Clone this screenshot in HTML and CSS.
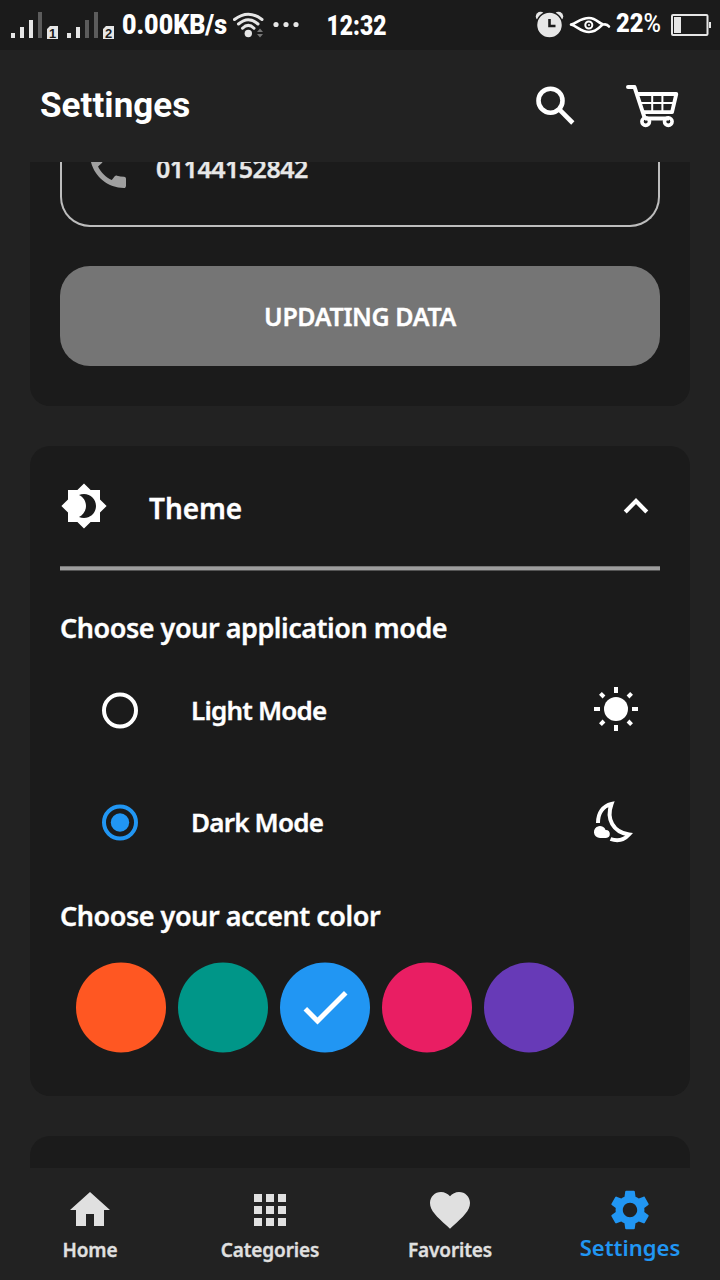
FILE: index.html
```html
<!DOCTYPE html>
<html lang="en">
<head>
<meta charset="utf-8">
<title>Settinges</title>
<link rel="stylesheet" href="styles.css">
</head>
<body>
<div class="app">
  <div class="status">
    <svg class="signals" width="106" height="50" viewBox="10 0 106 50">
      <g fill="#e6e6e6">
        <path d="M11 33h4v5h-4zM20 27h4v11h-4zM29 20h4v18h-4zM67 33h4v5h-4zM76 27h4v11h-4z"/>
        <path d="M50 26h8v13H47V29zM106 26h8v13h-11V29z"/>
      </g>
      <path fill="#5c5c5c" d="M38 12h4v26h-4zM85 20h4v18h-4zM94 12h4v26h-4z"/>
      <text class="sim" x="52.7" y="37.5">1</text>
      <text class="sim" x="108.5" y="37.5">2</text>
    </svg>
    <svg class="speed" width="108" height="50" viewBox="0 0 108 50"><text class="digits" x="1" y="34" font-size="28" textLength="105" lengthAdjust="spacingAndGlyphs">0.00KB/s</text></svg>
    <svg class="wifi" width="70" height="50" viewBox="232 0 70 50">
      <g fill="none" stroke="#e6e6e6" stroke-width="3" stroke-linecap="round">
        <path d="M234.5 19.5Q248.3 9 262 19.5"/>
        <path d="M238.5 24Q248.3 15.5 258 24"/>
        <path d="M242.5 28.2Q248.3 22.5 254 28.2"/>
      </g>
      <g fill="#e6e6e6"><circle cx="248.3" cy="33.5" r="3.7"/><circle cx="276" cy="24.5" r="2.6"/><circle cx="286" cy="24.5" r="2.6"/><circle cx="296" cy="24.5" r="2.6"/></g>
      <path fill="#777" d="M257 32l3-3.500 3 3.500zM257 34h6l-3 3.500z"/>
    </svg>
    <svg class="clock" width="62" height="50" viewBox="0 0 62 50"><text class="digits" x="0.5" y="35" font-size="28" textLength="60" lengthAdjust="spacingAndGlyphs">12:32</text></svg>
    <svg class="alarm" width="76" height="50" viewBox="535 0 76 50">
      <g fill="#e6e6e6"><circle cx="540.5" cy="16.5" r="4.7"/><circle cx="558.5" cy="16.5" r="4.7"/></g>
      <circle cx="549.5" cy="25" r="13" fill="#e6e6e6" stroke="#1b1b1b" stroke-width="1.5"/>
      <path fill="none" stroke="#1b1b1b" stroke-width="2.6" d="M549.5 19v7h6"/>
      <path fill="none" stroke="#fff" stroke-width="2.6" stroke-linejoin="round" stroke-linecap="round" d="M571 24.500C576 24 580 18 589 18C597 18 600 25 604 24.500Q607 24 609 26.500M571 24.500C577 26 581 32 589 32C596 32 600 27 602.500 24.500"/>
      <circle cx="588.8" cy="25" r="3.5" fill="none" stroke="#fff" stroke-width="2"/><circle cx="589" cy="25" r="1" fill="#fff"/>
    </svg>
    <svg class="percent" width="48" height="50" viewBox="0 0 48 50"><text class="digits" x="1" y="32" font-size="25" textLength="45" lengthAdjust="spacingAndGlyphs">22<tspan class="thin">%</tspan></text></svg>
    <svg class="battery" width="42" height="50" viewBox="670 0 42 50">
      <rect x="672" y="15" width="35.5" height="20" rx="1" fill="none" stroke="#e6e6e6" stroke-width="2"/>
      <path fill="#e6e6e6" d="M674 17h7v16h-7zM709 22h2v6h-2z"/>
    </svg>
  </div>

  <header class="bar">
    <h1 class="bar-title">Settinges</h1>
    <div class="bar-actions">
      <svg width="48" height="48" viewBox="0 0 48 48" fill="none" stroke="#fff">
        <circle cx="18.5" cy="18.7" r="12" stroke-width="4.6"/>
        <path stroke-width="4.6" d="M27 27.2L40.8 41"/>
      </svg>
      <svg width="56" height="48" viewBox="0 0 56 48" fill="none" stroke="#fff" stroke-linejoin="round">
        <path stroke-width="4" stroke-linecap="round" d="M4 5h6.500L20.500 35.500"/>
        <path stroke-width="3.8" d="M13.500 12H52.300L48 30.200H19.500M21 36.500H45"/>
        <path stroke-width="2" d="M16 21H50M28.200 12v17.500M38.400 12v17.500"/>
        <circle cx="21.7" cy="39.6" r="3.8" stroke-width="3.6"/>
        <circle cx="44.3" cy="39.6" r="3.8" stroke-width="3.6"/>
      </svg>
    </div>
  </header>

  <main class="content">
    <section class="card card-profile">
      <div class="field">
        <svg width="48" height="48" viewBox="0 0 24 24" fill="#a0a0a0"><path d="M20.010 15.380c-1.230 0-2.420-.2-3.530-.56-.35-.12-.74-.03-1.010.24l-1.570 1.970c-2.830-1.350-5.480-3.900-6.890-6.830l1.950-1.660c.27-.28.35-.67.24-1.020-.37-1.110-.56-2.300-.56-3.530 0-.54-.45-.99-.99-.99H4.190C3.650 3 3 3.240 3 3.990 3 13.280 10.730 21 20.010 21c.71 0 .99-.63.99-1.180v-3.450c0-.54-.45-.99-.99-.99z"/></svg>
        <span class="phone">01144152842</span>
      </div>
      <button class="update">UPDATING DATA</button>
    </section>

    <section class="card card-theme">
      <div class="card-head">
        <svg width="48" height="48" viewBox="0 0 24 24" fill="#fff"><path d="M20 8.690V4h-4.690L12 .69 8.690 4H4v4.690L.69 12 4 15.310V20h4.690L12 23.310 15.310 20H20v-4.690L23.310 12 20 8.690zM12 18c-.89 0-1.740-.2-2.500-.55C11.560 16.500 13 14.420 13 12s-1.440-4.500-3.500-5.450C10.260 6.200 11.110 6 12 6c3.310 0 6 2.690 6 6s-2.690 6-6 6z"/></svg>
        <h2 class="card-title">Theme</h2>
        <svg width="48" height="48" viewBox="0 0 24 24" fill="none" stroke="#fff" stroke-width="2.1"><path d="M6.600 15L12 9.500l5.400 5.500"/></svg>
      </div>
      <div class="rule"></div>
      <h3 class="label label-mode">Choose your application mode</h3>
      <div class="option">
        <svg width="48" height="48" viewBox="0 0 48 48"><circle cx="24" cy="23.5" r="16" fill="none" stroke="#fff" stroke-width="4"/></svg>
        <span class="option-name">Light Mode</span>
        <svg width="48" height="48" viewBox="0 0 48 48" fill="#fff">
          <circle cx="24" cy="22" r="12"/>
          <path d="M22 0h4v6h-4zM22 38h4v6h-4zM2 20h6v4H2zM40 20h6v4h-6z"/>
          <g transform="translate(24 22) rotate(45)"><path d="M-2-22h4v5h-4zM-2 17h4v5h-4zM-22-2h5v4h-5zM17-2h5v4h-5z"/></g>
        </svg>
      </div>
      <div class="option">
        <svg width="48" height="48" viewBox="0 0 48 48"><circle cx="24" cy="23.5" r="16" fill="none" stroke="#2196f3" stroke-width="4"/><circle cx="24" cy="23.5" r="9.2" fill="#2196f3"/></svg>
        <span class="option-name">Dark Mode</span>
        <svg width="48" height="48" viewBox="0 0 48 48">
          <path fill="none" stroke="#fff" stroke-width="4" d="M6 24C6 14 11 7 19.500 5C14 20 21 33 37 35.500C32 41 25 42.500 18.500 40"/>
          <path fill="#fff" d="M8 39a6 6 0 1 1 5.600-8A4 4 0 1 1 14 39z"/>
        </svg>
      </div>
      <h3 class="label label-accent">Choose your accent color</h3>
      <div class="swatches">
        <svg width="90" height="91"><circle cx="45" cy="45.5" r="45" fill="#ff5722"/></svg>
        <svg width="90" height="91"><circle cx="45" cy="45.5" r="45" fill="#009688"/></svg>
        <svg width="90" height="91"><circle cx="45" cy="45.5" r="45" fill="#2196f3"/><path fill="#fff" transform="translate(15 15) scale(2.5)" d="M9 16.170L4.830 12l-1.420 1.410L9 19 21 7l-1.410-1.410z"/></svg>
        <svg width="90" height="91"><circle cx="45" cy="45.5" r="45" fill="#e91e63"/></svg>
        <svg width="90" height="91"><circle cx="45" cy="45.5" r="45" fill="#673ab7"/></svg>
      </div>
    </section>

    <section class="card card-next"></section>
  </main>

  <nav class="tabs">
    <div class="tab">
      <svg width="48" height="48" viewBox="0 0 24 24"><path d="M10 20v-6h4v6h5v-8h3L12 3 2 12h3v8z"/></svg>
      <span class="tab-name">Home</span>
    </div>
    <div class="tab">
      <svg width="48" height="48" viewBox="0 0 24 24"><path d="M4 8h4V4H4v4zm6 12h4v-4h-4v4zm-6 0h4v-4H4v4zm0-6h4v-4H4v4zm6 0h4v-4h-4v4zm6-10v4h4V4h-4zm-6 4h4V4h-4v4zm6 6h4v-4h-4v4zm0 6h4v-4h-4v4z"/></svg>
      <span class="tab-name">Categories</span>
    </div>
    <div class="tab">
      <svg width="48" height="48" viewBox="0 0 24 24"><path d="M12 21.350l-1.450-1.320C5.400 15.360 2 12.280 2 8.500 2 5.420 4.420 3 7.500 3c1.740 0 3.410.81 4.500 2.090C13.090 3.810 14.760 3 16.500 3 19.580 3 22 5.420 22 8.500c0 3.780-3.400 6.860-8.550 11.540L12 21.350z"/></svg>
      <span class="tab-name">Favorites</span>
    </div>
    <div class="tab tab-active">
      <svg width="48" height="48" viewBox="0 0 24 24"><path d="M19.140 12.940c.04-.3.06-.61.06-.94 0-.32-.02-.64-.07-.94l2.030-1.580c.18-.14.23-.41.12-.61l-1.920-3.320c-.12-.22-.37-.29-.59-.22l-2.390.96c-.5-.38-1.030-.7-1.620-.94l-.36-2.540c-.04-.24-.24-.41-.48-.41h-3.840c-.24 0-.43.17-.47.41l-.36 2.540c-.59.24-1.130.57-1.620.94l-2.390-.96c-.22-.08-.47 0-.59.22L2.740 8.870c-.12.21-.08.47.12.61l2.030 1.580c-.05.3-.09.63-.09.94s.02.64.07.94l-2.030 1.580c-.18.14-.23.41-.12.61l1.920 3.320c.12.22.37.29.59.22l2.390-.96c.5.38 1.030.7 1.620.94l.36 2.540c.05.24.24.41.48.41h3.840c.24 0 .44-.17.47-.41l.36-2.540c.59-.24 1.130-.56 1.620-.94l2.390.96c.22.08.47 0 .59-.22l1.920-3.320c.12-.22.07-.47-.12-.61l-2.010-1.580zM12 15.600c-1.980 0-3.600-1.620-3.600-3.600s1.620-3.600 3.600-3.600 3.600 1.620 3.600 3.600-1.620 3.600-3.600 3.600z"/></svg>
      <span class="tab-name">Settinges</span>
    </div>
  </nav>
</div>
</body>
</html>
```
FILE: styles.css
```css
* { box-sizing: border-box; }
body {
  margin: 0;
  background: #222;
  color: #fff;
  font-family: "Noto Sans", "Open Sans", sans-serif;
  font-weight: 600;
}
h1, h2, h3 { margin: 0; }
svg { display: block; flex: none; }

.app {
  display: flex;
  flex-direction: column;
  width: 720px;
  height: 1280px;
  overflow: hidden;
}

/* Status bar */
.status {
  display: flex;
  flex: none;
  height: 50px;
  padding-left: 10px;
  background: #1b1b1b;
}
.digits { fill: #fff; font-family: Roboto, sans-serif; font-weight: 900; }
.thin { font-weight: 500; }
.sim { fill: #1b1b1b; font: 700 13px "Liberation Sans", sans-serif; text-anchor: middle; }
.speed { margin-left: 5px; }
.wifi { margin-left: 3px; }
.clock { margin-left: 24px; }
.alarm { margin-left: 147px; }
.percent { margin-left: 4px; }
.battery { margin-left: 7px; }

/* App bar */
.bar {
  display: flex;
  flex: none;
  align-items: center;
  justify-content: space-between;
  height: 112px;
  padding: 0 40px;
}
.bar-title {
  font: 700 35px/48px Roboto, sans-serif;
  letter-spacing: 0.05px;
}
.bar-actions { display: flex; gap: 44px; }

/* Scrolling content */
.content {
  display: flex;
  flex: 1;
  flex-direction: column;
  gap: 40px;
  min-height: 0;
  padding: 0 30px;
  overflow: hidden;
}
.card {
  flex: none;
  padding: 0 30px;
  border-radius: 20px;
  background: #1b1b1b;
}
.card-profile { height: 244px; border-radius: 0 0 20px 20px; }
.card-theme { height: 650px; }
.card-next { height: 120px; }

.phone, .update, .card-title, .label, .option-name, .tab-name {
  -webkit-text-stroke: 0.35px currentColor;
}

.field {
  display: flex;
  align-items: flex-start;
  gap: 24px;
  height: 65px;
  padding-left: 22px;
  border: 2px solid #bdbdbd;
  border-top: 0;
  border-radius: 0 0 30px 30px;
}
.field svg, .phone { margin-top: -16px; }
.phone {
  color: #e8e8e8;
  font-size: 25px;
  line-height: 45px;
  letter-spacing: -0.5px;
}
.update {
  display: block;
  width: 100%;
  height: 100px;
  margin-top: 39px;
  border: 0;
  border-radius: 30px;
  background: #757575;
  color: #fff;
  font: 600 25px/40px "Noto Sans", sans-serif;
  letter-spacing: -0.4px;
}

.card-head { display: flex; align-items: center; height: 120px; }
.card-title {
  flex: 1;
  padding: 3px 0 0 41px;
  font-size: 28px;
  font-weight: 600;
  line-height: 40px;
  letter-spacing: -0.05px;
}
.rule {
  height: 5px;
  border-top: 1px solid #777;
  border-bottom: 1px solid #555;
  background: #9e9e9e;
}
.label {
  font-size: 27px;
  font-weight: 600;
  line-height: 40px;
  letter-spacing: -0.47px;
}
.label-mode { margin-top: 37px; margin-bottom: 7px; }
.label-accent { margin-top: 17px; }
.option {
  display: flex;
  align-items: center;
  height: 112px;
  padding: 0 20px 0 36px;
}
.option-name {
  flex: 1;
  padding: 0 0 2px 47px;
  font-size: 26px;
  line-height: 40px;
  letter-spacing: -0.8px;
}
.swatches { display: flex; gap: 12px; padding: 26px 0 0 16px; }

/* Bottom navigation */
.tabs {
  display: grid;
  grid-template-columns: repeat(4, 1fr);
  flex: none;
  height: 112px;
  padding-top: 18px;
}
.tab {
  display: flex;
  flex-direction: column;
  align-items: center;
  color: #e0e0e0;
  fill: currentColor;
}
.tab-name { font-size: 19px; line-height: 33px; letter-spacing: -0.15px; }
.tab-active { color: #2196f3; }
.tab-active .tab-name {
  font-size: 22px;
  line-height: 27px;
  letter-spacing: 0;
  -webkit-text-stroke-width: 0;
}
```
